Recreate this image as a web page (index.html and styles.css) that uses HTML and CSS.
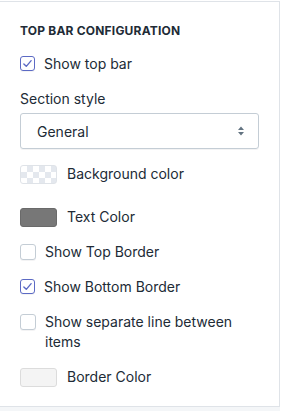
FILE: index.html
```html
<!DOCTYPE html>
<html lang="en">

<head>
    <meta charset="UTF-8" />
    <title>Top bar settings</title>
    <link rel="stylesheet" href="styles.css">
</head>

<body>
    <div class="panel">
        <h3 class="title">Top bar configuration</h3>

        <label class="check">
            <span class="box on"><svg viewBox="0 0 16 16"><path d="M3.5 8.5l3 3 6-7" /></svg></span>
            <span>Show top bar</span>
        </label>

        <div class="field">
            <span class="label">Section style</span>
            <div class="select">
                <span>General</span>
                <svg class="arrows" viewBox="0 0 8 12"><path d="M4 1.5L7 5H1z M4 10.5L1 7h6z" /></svg>
            </div>
        </div>

        <div class="color">
            <span class="swatch clear"></span>
            <span>Background color</span>
        </div>

        <div class="color second">
            <span class="swatch gray"></span>
            <span>Text Color</span>
        </div>

        <label class="check">
            <span class="box"></span>
            <span>Show Top Border</span>
        </label>

        <label class="check">
            <span class="box on"><svg viewBox="0 0 16 16"><path d="M3.5 8.5l3 3 6-7" /></svg></span>
            <span>Show Bottom Border</span>
        </label>

        <label class="check">
            <span class="box"></span>
            <span>Show separate line between items</span>
        </label>

        <div class="color">
            <span class="swatch light"></span>
            <span>Border Color</span>
        </div>
    </div>
    <div class="shade"></div>
</body>

</html>
```

FILE: styles.css
```css
body {
    margin: 0;
    padding: 0;
    background-color: #fff;
    font-family: Inter, "Liberation Sans", sans-serif;
    color: #212b36;
    font-size: 14px;
}

.panel {
    width: 239px;
    margin-top: 1px;
    padding: 21px 20px 19px 20px;
    border-top: 1px solid #dfe3e8;
    border-right: 1px solid #dfe3e8;
    border-bottom: 1px solid #dfe3e8;
    display: flex;
    flex-direction: column;
    gap: 15px;
}

.shade {
    width: 280px;
    height: 4px;
    background-color: #f4f6f8;
}

.title {
    margin: 0;
    font-size: 12px;
    line-height: 16px;
    font-weight: 700;
    text-transform: uppercase;
    letter-spacing: 0.2px;
}

.check {
    display: flex;
    align-items: flex-start;
    gap: 9px;
    line-height: 20px;
    padding-right: 14px;
}

.box {
    flex: none;
    width: 14px;
    height: 14px;
    margin-top: 2px;
    border: 1px solid #c4cdd5;
    border-radius: 3px;
    background-color: #fff;
    box-shadow: 0 1px 0 rgba(22, 29, 37, 0.05);
}

.box.on {
    border: 1.5px solid #5c6ac4;
    width: 13px;
    height: 13px;
}

.box svg {
    display: block;
    width: 13px;
    height: 13px;
}

.box path {
    fill: none;
    stroke: #5c6ac4;
    stroke-width: 1.7;
    stroke-linecap: round;
    stroke-linejoin: round;
}

.field {
    display: flex;
    flex-direction: column;
    gap: 4px;
}

.label {
    line-height: 20px;
}

.select {
    height: 34px;
    border: 1px solid #c4cdd5;
    border-radius: 3px;
    box-shadow: 0 1px 0 rgba(22, 29, 37, 0.05);
    display: flex;
    align-items: center;
    justify-content: space-between;
    padding: 0 13px 0 16px;
}

.arrows {
    width: 8px;
    height: 12px;
}

.arrows path {
    fill: #637381;
}

.color {
    display: flex;
    align-items: center;
    gap: 10px;
    line-height: 20px;
}

.color.second {
    margin-top: 8px;
}

.swatch {
    width: 35px;
    height: 17px;
    border: 1px solid #dfe3e8;
    border-radius: 3px;
}

.swatch.clear {
    background-color: #fff;
    background-image: conic-gradient(#e4e8ee 25%, #fff 25% 50%, #e4e8ee 50% 75%, #fff 75%);
    background-size: 12px 12px;
}

.swatch.gray {
    background-color: #777;
    border-color: #6a6a6a;
}

.swatch.light {
    background-color: #f4f4f4;
    border-color: #dcdcdc;
}
```
